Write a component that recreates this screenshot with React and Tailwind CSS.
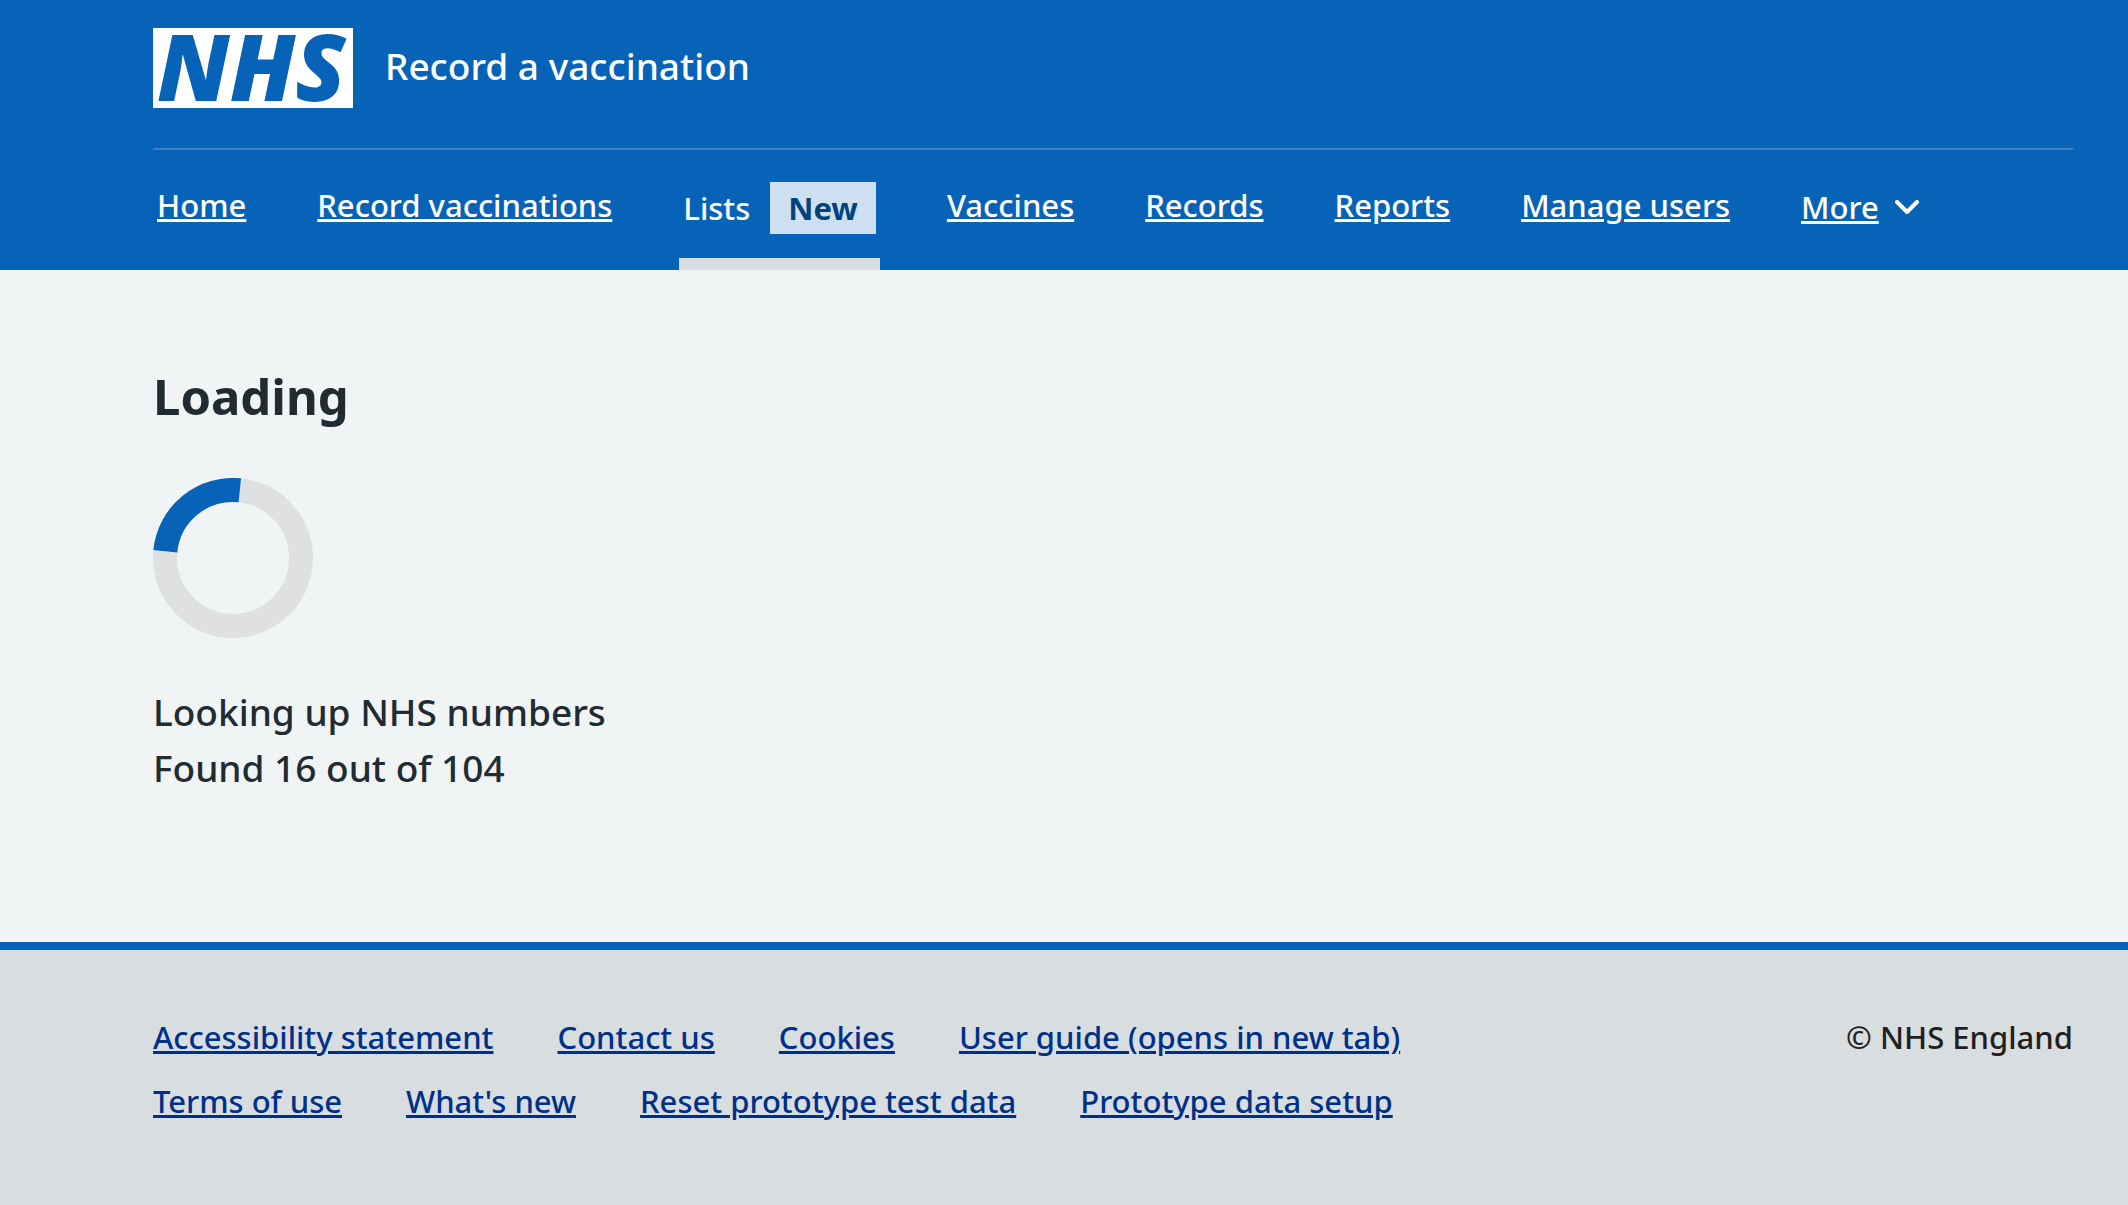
import React from "react";

const linkUnderline = "underline decoration-[3px] underline-offset-2";

const navBefore = ["Home", "Record vaccinations"];
const navAfter = ["Vaccines", "Records", "Reports", "Manage users"];

const footerLinks = [
  "Accessibility statement",
  "Contact us",
  "Cookies",
  "User guide (opens in new tab)",
  "Terms of use",
  "What's new",
  "Reset prototype test data",
  "Prototype data setup",
];

function Logo() {
  return (
    <svg
      viewBox="0 0 200 80"
      className="h-20 w-[200px] shrink-0 overflow-visible"
      role="img"
      aria-label="NHS"
    >
      <rect width="200" height="80" fill="#ffffff" />
      <text
        x="4"
        y="73"
        fill="#0763b7"
        className="font-['Noto_Sans',sans-serif] text-[92px] font-black italic"
      >
        NHS
      </text>
    </svg>
  );
}

function NavLink({ label }) {
  return (
    <li className="px-1 pt-8">
      <a href="#" className={`block leading-[46px] ${linkUnderline}`}>
        {label}
      </a>
    </li>
  );
}

function Header() {
  return (
    <header className="bg-[#0763b7] pr-[55px] pl-[153px] text-white">
      <div className="flex items-center gap-8 border-b-2 border-white/20 pt-7 pb-10">
        <a href="#" aria-label="NHS home">
          <Logo />
        </a>
        <a href="#" className="pb-1 text-[37px] leading-[56px]">
          Record a vaccination
        </a>
      </div>
      <nav aria-label="Primary">
        <ul className="flex h-[120px] gap-[63px] text-[31px] whitespace-nowrap">
          {navBefore.map((label) => (
            <NavLink key={label} label={label} />
          ))}
          <li className="border-b-[12px] border-[#d8dde0] px-1 pt-8">
            <a href="#" aria-current="page" className="flex items-center gap-5 leading-[52px]">
              <span className="leading-[50px]">Lists</span>
              <strong className="bg-[#cddff1] px-[18px] font-bold text-[#00437d]">New</strong>
            </a>
          </li>
          {navAfter.map((label) => (
            <NavLink key={label} label={label} />
          ))}
          <li className="px-1 pt-8">
            <button type="button" aria-expanded="false" className="flex items-center gap-4 leading-[50px]">
              <span className={linkUnderline}>More</span>
              <svg viewBox="0 0 24 14" className="h-[14px] w-6" fill="none" aria-hidden="true">
                <path
                  d="M2 2 12 12 22 2"
                  stroke="currentColor"
                  strokeWidth="4"
                  strokeLinecap="round"
                  strokeLinejoin="round"
                />
              </svg>
            </button>
          </li>
        </ul>
      </nav>
    </header>
  );
}

function Spinner() {
  return (
    <svg viewBox="0 0 160 160" className="size-40" fill="none" strokeWidth="24" aria-hidden="true">
      <circle cx="80" cy="80" r="68" stroke="#dee0e2" />
      <path d="M12.3 73.2A68 68 0 0 1 86.8 12.3" stroke="#0763b7" />
    </svg>
  );
}

export default function App() {
  return (
    <div className="flex min-h-screen flex-col bg-[#f0f4f5] font-['Noto_Sans',sans-serif] font-medium text-[#212b32]">
      <Header />
      <main className="pt-24 pr-[55px] pb-[146px] pl-[153px]">
        <h1 className="text-[49px] leading-[60px] font-bold">Loading</h1>
        <div className="mt-[52px]">
          <Spinner />
        </div>
        <div role="status" className="mt-[46px] text-[37px] leading-[56px]">
          <p>Looking up NHS numbers</p>
          <p>Found 16 out of 104</p>
        </div>
      </main>
      <footer className="flex grow items-start justify-between border-t-8 border-[#0763b7] bg-[#d8dde0] pt-[63px] pr-[55px] pb-16 pl-[153px] text-[31px] leading-[48px]">
        <ul className="flex w-3/4 flex-wrap gap-x-16 gap-y-4 text-[#003087]">
          {footerLinks.map((label) => (
            <li key={label}>
              <a href="#" className={linkUnderline}>
                {label}
              </a>
            </li>
          ))}
        </ul>
        <p className="whitespace-nowrap text-[#231f20]">© NHS England</p>
      </footer>
    </div>
  );
}
